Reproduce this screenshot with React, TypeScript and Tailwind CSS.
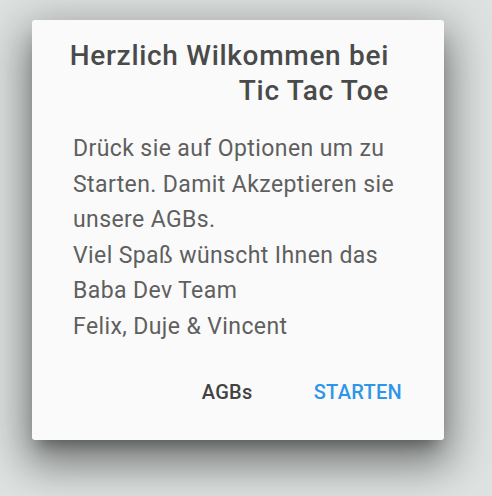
import React from "react";

export default function App() {
  return (
    <div
      className="w-[492px] h-[496px] bg-[#dde1e0] pt-[20px] pl-[32px] overflow-hidden"
      style={{ fontFamily: "Roboto, 'Noto Sans', sans-serif" }}
    >
      <div className="w-[412px] h-[420px] bg-[#fafafa] rounded-[3px] shadow-[0_24px_38px_3px_rgba(0,0,0,0.3),0_9px_46px_8px_rgba(0,0,0,0.22),0_11px_15px_-7px_rgba(0,0,0,0.35)] flex flex-col">
        <div className="pt-[18px] pr-[55px] text-right text-[28px] leading-[35px] tracking-[0.7px] font-medium text-[#4a4a4a]">
          Herzlich Wilkommen bei
          <br />
          Tic Tac Toe
        </div>
        <div className="pl-[41px] pt-[23px] text-[23px] leading-[35.6px] tracking-[0.4px] text-[#5f5f5f]">
          Drück sie auf Optionen um zu
          <br />
          Starten. Damit Akzeptieren sie
          <br />
          unsere AGBs.
          <br />
          Viel Spaß wünscht Ihnen das
          <br />
          Baba Dev Team
          <br />
          Felix, Duje &amp; Vincent
        </div>
        <div className="flex justify-end items-center gap-[61px] pr-[42px] mt-[35px] text-[20px] leading-[24px] tracking-[0.3px] font-medium">
          <span className="text-[#424242]">AGBs</span>
          <span className="text-[#2f96e6]">STARTEN</span>
        </div>
      </div>
    </div>
  );
}
